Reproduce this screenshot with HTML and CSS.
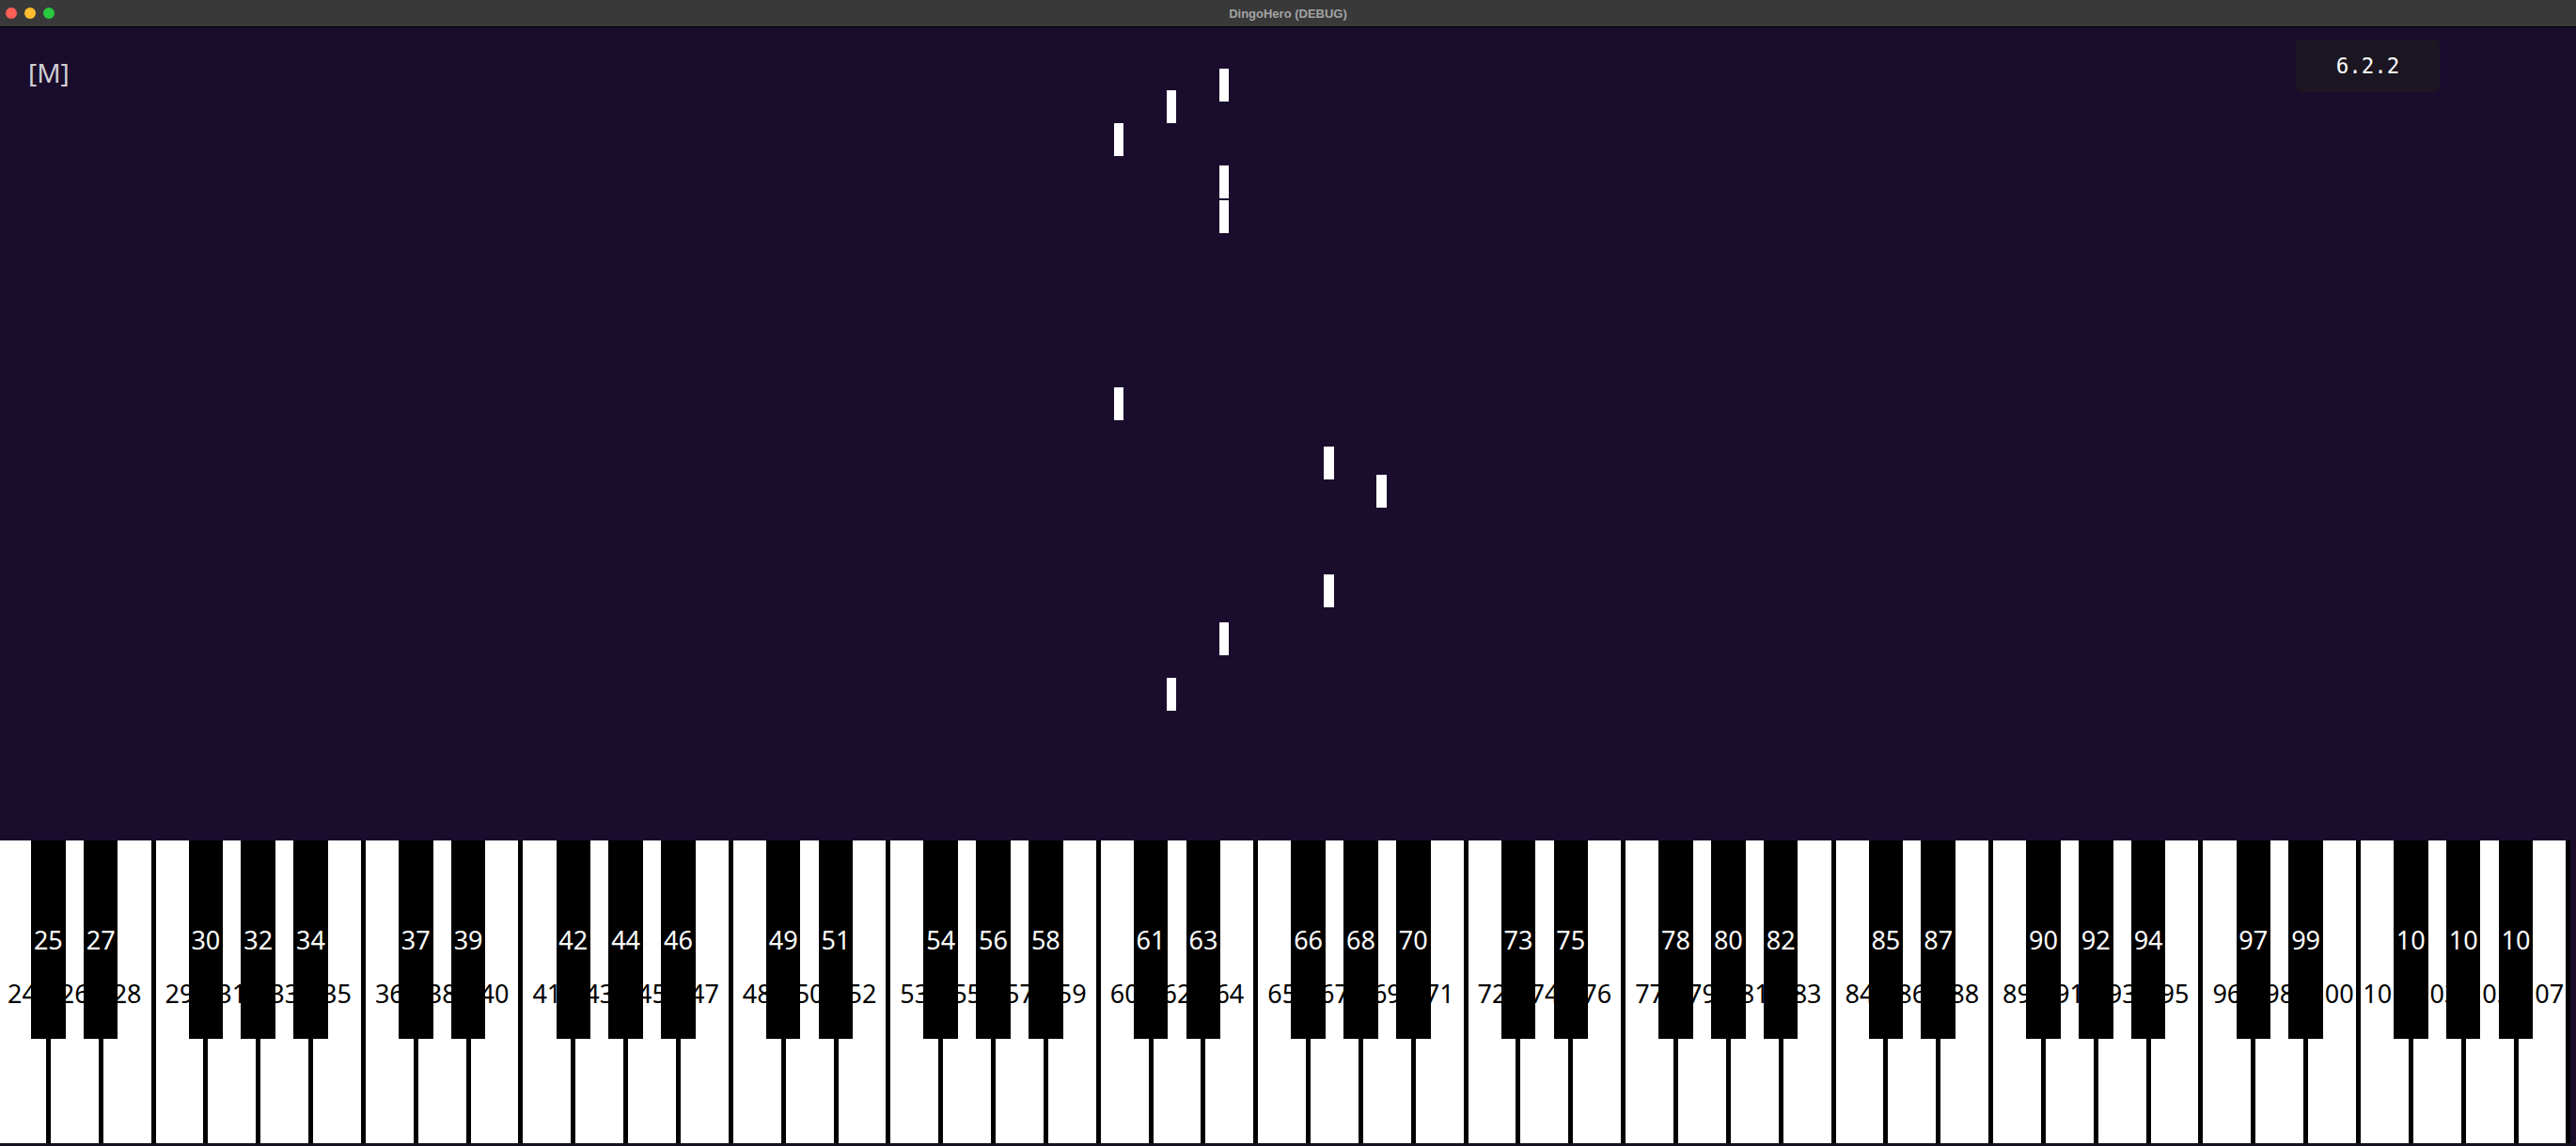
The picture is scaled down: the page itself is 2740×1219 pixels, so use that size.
FILE: index.html
```html
<!DOCTYPE html>
<html>
<head>
<meta charset="utf-8">
<title>DingoHero (DEBUG)</title>
<link rel="stylesheet" href="styles.css">
</head>
<body>
<div class="window">
  <div class="titlebar">
    <div class="lights">
      <span class="light red"></span>
      <span class="light yellow"></span>
      <span class="light green"></span>
    </div>
    <div class="title">DingoHero (DEBUG)</div>
    <div></div>
  </div>
  <div class="stage">
    <div class="hud">
      <div class="mode">[M]</div>
      <div class="version">6.2.2</div>
    </div>
    <div class="note" style="left:1297px;top:44px"></div>
    <div class="note" style="left:1241px;top:67px"></div>
    <div class="note" style="left:1185px;top:102px"></div>
    <div class="note" style="left:1297px;top:147px"></div>
    <div class="note" style="left:1297px;top:184px"></div>
    <div class="note" style="left:1185px;top:383px"></div>
    <div class="note wide" style="left:1408px;top:446px"></div>
    <div class="note wide" style="left:1464px;top:476px"></div>
    <div class="note wide" style="left:1408px;top:582px"></div>
    <div class="note" style="left:1297px;top:633px"></div>
    <div class="note" style="left:1241px;top:692px"></div>
  </div>
  <div class="piano">
    <div class="wk"><span class="wl">24</span><div class="bk"><span class="bl">25</span></div></div>
    <div class="wk"><span class="wl">26</span><div class="bk"><span class="bl">27</span></div></div>
    <div class="wk"><span class="wl">28</span></div>
    <div class="wk"><span class="wl">29</span><div class="bk"><span class="bl">30</span></div></div>
    <div class="wk"><span class="wl">31</span><div class="bk"><span class="bl">32</span></div></div>
    <div class="wk"><span class="wl">33</span><div class="bk"><span class="bl">34</span></div></div>
    <div class="wk"><span class="wl">35</span></div>

    <div class="wk"><span class="wl">36</span><div class="bk"><span class="bl">37</span></div></div>
    <div class="wk"><span class="wl">38</span><div class="bk"><span class="bl">39</span></div></div>
    <div class="wk"><span class="wl">40</span></div>
    <div class="wk"><span class="wl">41</span><div class="bk"><span class="bl">42</span></div></div>
    <div class="wk"><span class="wl">43</span><div class="bk"><span class="bl">44</span></div></div>
    <div class="wk"><span class="wl">45</span><div class="bk"><span class="bl">46</span></div></div>
    <div class="wk"><span class="wl">47</span></div>

    <div class="wk"><span class="wl">48</span><div class="bk"><span class="bl">49</span></div></div>
    <div class="wk"><span class="wl">50</span><div class="bk"><span class="bl">51</span></div></div>
    <div class="wk"><span class="wl">52</span></div>
    <div class="wk"><span class="wl">53</span><div class="bk"><span class="bl">54</span></div></div>
    <div class="wk"><span class="wl">55</span><div class="bk"><span class="bl">56</span></div></div>
    <div class="wk"><span class="wl">57</span><div class="bk"><span class="bl">58</span></div></div>
    <div class="wk"><span class="wl">59</span></div>

    <div class="wk"><span class="wl">60</span><div class="bk"><span class="bl">61</span></div></div>
    <div class="wk"><span class="wl">62</span><div class="bk"><span class="bl">63</span></div></div>
    <div class="wk"><span class="wl">64</span></div>
    <div class="wk"><span class="wl">65</span><div class="bk"><span class="bl">66</span></div></div>
    <div class="wk"><span class="wl">67</span><div class="bk"><span class="bl">68</span></div></div>
    <div class="wk"><span class="wl">69</span><div class="bk"><span class="bl">70</span></div></div>
    <div class="wk"><span class="wl">71</span></div>

    <div class="wk"><span class="wl">72</span><div class="bk"><span class="bl">73</span></div></div>
    <div class="wk"><span class="wl">74</span><div class="bk"><span class="bl">75</span></div></div>
    <div class="wk"><span class="wl">76</span></div>
    <div class="wk"><span class="wl">77</span><div class="bk"><span class="bl">78</span></div></div>
    <div class="wk"><span class="wl">79</span><div class="bk"><span class="bl">80</span></div></div>
    <div class="wk"><span class="wl">81</span><div class="bk"><span class="bl">82</span></div></div>
    <div class="wk"><span class="wl">83</span></div>

    <div class="wk"><span class="wl">84</span><div class="bk"><span class="bl">85</span></div></div>
    <div class="wk"><span class="wl">86</span><div class="bk"><span class="bl">87</span></div></div>
    <div class="wk"><span class="wl">88</span></div>
    <div class="wk"><span class="wl">89</span><div class="bk"><span class="bl">90</span></div></div>
    <div class="wk"><span class="wl">91</span><div class="bk"><span class="bl">92</span></div></div>
    <div class="wk"><span class="wl">93</span><div class="bk"><span class="bl">94</span></div></div>
    <div class="wk"><span class="wl">95</span></div>

    <div class="wk"><span class="wl">96</span><div class="bk"><span class="bl">97</span></div></div>
    <div class="wk"><span class="wl">98</span><div class="bk"><span class="bl">99</span></div></div>
    <div class="wk"><span class="wl">100</span></div>
    <div class="wk"><span class="wl">101</span><div class="bk"><span class="bl">102</span></div></div>
    <div class="wk"><span class="wl">103</span><div class="bk"><span class="bl">104</span></div></div>
    <div class="wk"><span class="wl">105</span><div class="bk"><span class="bl">106</span></div></div>
    <div class="wk"><span class="wl">107</span></div>
  </div>
  <div class="bottom"></div>
</div>
</body>
</html>
```

FILE: styles.css
```css
html, body {
  margin: 0;
  padding: 0;
  background: #1a0c2d;
  overflow: hidden;
}

.window {
  width: 2740px;
  height: 1219px;
  display: flex;
  flex-direction: column;
  background: #1a0c2d;
  overflow: hidden;
}

.titlebar {
  flex: none;
  height: 28px;
  background: #393939;
  border-bottom: 1px solid #000;
  display: grid;
  grid-template-columns: 1fr auto 1fr;
  align-items: center;
}

.lights {
  display: flex;
  gap: 8px;
  padding-left: 6px;
}

.light {
  width: 12px;
  height: 12px;
  border-radius: 50%;
  display: block;
}

.red { background: #fe5f57; }
.yellow { background: #febc2e; }
.green { background: #28c840; }

.title {
  font-family: "Liberation Sans", Arial, sans-serif;
  font-weight: bold;
  font-size: 13px;
  color: #a3a3a3;
}

.stage {
  flex: 1;
  position: relative;
}

.hud {
  display: flex;
  justify-content: space-between;
  align-items: flex-start;
  padding: 13px 145px 0 30px;
}

.mode {
  margin-top: 21px;
  font-family: "Noto Sans", sans-serif;
  font-size: 28px;
  line-height: 1;
  color: #cfcfd2;
}

.version {
  width: 153px;
  height: 56px;
  border-radius: 6px;
  background: #1b1621;
  display: flex;
  align-items: center;
  justify-content: center;
  font-family: "DejaVu Sans Mono", monospace;
  font-size: 22.5px;
  color: #ffffff;
}

.note {
  position: absolute;
  width: 10px;
  height: 35px;
  background: #ffffff;
}

.note.wide {
  width: 11px;
}

.piano {
  flex: none;
  align-self: flex-start;
  height: 322px;
  margin-left: -2px;
  padding-right: 5px;
  display: flex;
  gap: 5px;
  background: #000;
}

.wk {
  flex: none;
  width: 50.85px;
  position: relative;
  background: #fff;
  text-align: center;
  font-family: "Noto Sans", sans-serif;
  font-size: 27px;
}

.wl {
  display: block;
  padding-top: 145px;
  line-height: 35px;
  color: #000;
  white-space: nowrap;
}

.bk {
  position: absolute;
  top: 0;
  left: calc(100% - 15.75px);
  width: 36.5px;
  height: 211px;
  background: #000;
  z-index: 2;
}

.bl {
  display: block;
  margin-top: 88px;
  height: 35px;
  line-height: 35px;
  overflow: hidden;
  word-break: break-all;
  color: #fff;
}

.bottom {
  flex: none;
  height: 3px;
  background: #15101e;
}
```
